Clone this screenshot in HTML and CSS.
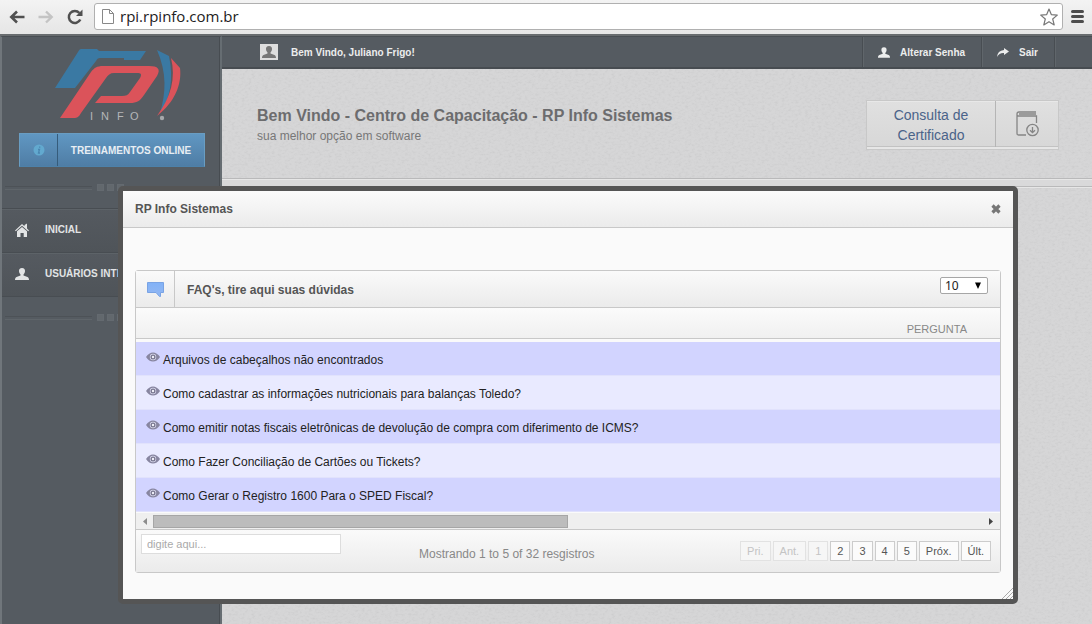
FILE: index.html
```html
<!DOCTYPE html>
<html lang="pt-BR">
<head>
<meta charset="utf-8">
<title>RP Info Sistemas</title>
<link rel="stylesheet" href="styles.css">
</head>
<body>
<svg class="defs" aria-hidden="true">
  <symbol id="user" viewBox="0 0 14 12"><path d="M7 0C4.800 0 3.800 1.400 4 3.300c.1 1.400.7 2.400 1.500 3.100v1.200L1.500 9C.4 9.500 0 10.500 0 12h14c0-1.500-.4-2.500-1.500-3l-4-1.400V6.400c.8-.7 1.400-1.700 1.500-3.100C10.200 1.400 9.200 0 7 0z" fill="currentColor"/></symbol>
  <symbol id="eye" viewBox="0 0 14 10"><path d="M0 5Q3 .5 7 .5T14 5Q11 9.500 7 9.500T0 5z" fill="#8785a0"/><circle cx="7" cy="5" r="3.200" fill="#dcdcf0"/><circle cx="7" cy="5" r="2.500" fill="#77758e"/><circle cx="7" cy="5" r="1.200" fill="#f0f0fa"/></symbol>
</svg>

<div class="page">
  <header class="browser">
    <button class="nav-btn" aria-label="Voltar"><svg width="16" height="14" viewBox="0 0 16 14"><path d="M15.500 7H2.500M8 1.500 2.300 7 8 12.500" fill="none" stroke="#505050" stroke-width="2.600"/></svg></button>
    <button class="nav-btn" aria-label="Avançar"><svg width="16" height="14" viewBox="0 0 16 14"><path d="M.5 7h13M8 1.500 13.700 7 8 12.500" fill="none" stroke="#c4c4c4" stroke-width="2.400"/></svg></button>
    <button class="nav-btn" aria-label="Recarregar"><svg width="16" height="16" viewBox="0 0 16 16"><path d="M13.300 10.500A6 6 0 1 1 12.400 4" fill="none" stroke="#505050" stroke-width="2.500"/><path d="M15.500.5V7H9z" fill="#505050"/></svg></button>
    <div class="address">
      <svg width="12" height="15" viewBox="0 0 12 15"><path d="M.5.500h7l4 4v10H.5zM7.500.500v4h4" fill="#fff" stroke="#888"/></svg>
      <input class="url" type="text" aria-label="Endereço" value="rpi.rpinfo.com.br">
      <svg width="18" height="18" viewBox="0 0 18 18"><path d="M9 1l2.300 5.600 6 .5-4.600 3.900 1.500 5.900L9 13.700l-5.200 3.200 1.500-5.900L.7 7.100l6-.5z" fill="#fff" stroke="#777" stroke-width="1.200" stroke-linejoin="round"/></svg>
    </div>
    <button class="nav-btn" aria-label="Menu"><svg width="13" height="13" viewBox="0 0 13 13"><path d="M1.500 1.500h10M1.500 6.500h10M1.500 11.500h10" stroke="#4c4c4c" stroke-width="3" stroke-linecap="round"/></svg></button>
  </header>

  <div class="app">
    <aside class="sidebar">
      <svg class="logo" role="img" aria-label="RP Info" viewBox="0 0 130 76">
        <path d="M27 2h16l2 2h47l-6 9H70V11H46c-2 0-3 1-4 3L21 41H1L24 5c1-2 2-3 3-3z" fill="#3a79a3"/>
        <path d="M49 19h46c9 0 12 3 8 10L90 48c-4 6-7 8-14 8H41l6-7h21c4 0 6-1 8-4l10-14c2-4 1-5-3-5H60c-4 0-6 2-8 5L27 66c-2 4-4 5-7 5H6l31-46c3-4 6-6 12-6z" fill="#db535a"/>
        <path d="M103 3l12 6c5 23 1 43-9 57 6-20 7-40-3-63z" fill="#3a79a3"/>
        <path d="M117 11l9 10c2 16-5 34-23 48 14-19 19-38 14-58z" fill="#db535a"/>
        <circle cx="108" cy="71" r="2.200" fill="#a5a7aa"/>
        <text x="36" y="73" class="logo-text">I</text><text x="47" y="73" class="logo-text">N</text><text x="63" y="73" class="logo-text">F</text><text x="76" y="73" class="logo-text">O</text>
      </svg>
      <button class="training"><span class="training-icon"><svg width="12" height="12" viewBox="0 0 12 12"><circle cx="6" cy="6" r="5.500" fill="#62a9cf"/><path d="M6.700 2.500v1.200M5 5.500h1.500L5.500 9H7" stroke="#4a86b1" stroke-width="1.300" fill="none"/></svg></span><span class="training-label">TREINAMENTOS ONLINE</span></button>
      <div class="divider"><i></i><i></i><i></i></div>
      <nav class="menu">
        <a href="#"><svg width="14" height="14" viewBox="0 0 14 14"><path d="M0 7.500 7 1l2.500 2.300V2L12 .5v5l2 2-.8.800L7 2.800.8 8.300z" fill="currentColor"/><path d="M2 8.300 7 4l5 4.300V14H8.700v-4H5.500v4H2z" fill="currentColor"/></svg>INICIAL</a>
        <a href="#"><svg width="14" height="12"><use href="#user"/></svg>USUÁRIOS INTERNOS</a>
      </nav>
      <div class="divider"><i></i><i></i><i></i></div>
    </aside>

    <main class="content">
      <div class="topbar">
        <span class="avatar"><svg width="14" height="12"><use href="#user"/></svg></span>
        <span class="welcome">Bem Vindo, Juliano Frigo!</span>
        <a class="top-link" href="#"><svg width="12" height="11"><use href="#user"/></svg>Alterar Senha</a>
        <a class="top-link" href="#"><svg width="12" height="9" viewBox="0 0 12 9"><path d="M7 0l5 3.500L7 7V5Q2.500 4.500 0 9 .5 2.500 7 2z" fill="currentColor"/></svg>Sair</a>
        <span class="top-end"></span>
      </div>
      <section class="hero">
        <div class="hero-text">
          <h1>Bem Vindo - Centro de Capacitação - RP Info Sistemas</h1>
          <p>sua melhor opção em software</p>
        </div>
        <a class="certificate" href="#">
          <span class="cert-label">Consulta de Certificado</span>
          <span class="cert-icon"><svg width="23" height="26" viewBox="0 0 23 26"><g fill="none" stroke="#858585" stroke-width="1.300"><path d="M20 1H3C1.600 1 1 1.500 1 3v19.500c0 1 .6 1.500 1.500 1.500H10M1 3.500Q1 5 3 5h17.500v7M3 3h17"/><circle cx="16.500" cy="19" r="5.700"/><path d="M16.500 16v5.500M14 19.200l2.500 2.500 2.500-2.500"/></g></svg></span>
        </a>
      </section>
    </main>
  </div>

  <div class="dialog" role="dialog" aria-labelledby="dialog-title">
    <div class="dialog-head">
      <h2 id="dialog-title">RP Info Sistemas</h2>
      <button class="close" aria-label="Fechar"><svg width="10" height="10" viewBox="0 0 10 10"><path d="M1.500 1.500l7 7M8.500 1.500l-7 7" stroke="#767676" stroke-width="3.200"/></svg></button>
    </div>
    <div class="panel">
      <div class="panel-head">
        <span class="panel-icon"><svg width="17" height="16" viewBox="0 0 17 16"><defs><linearGradient id="bubble" x2="0" y2="1"><stop stop-color="#82b2f7"/><stop offset="1" stop-color="#93b7f2"/></linearGradient></defs><path d="M.5.500h16v10h-3v4h-1l-3.500-4H.5z" fill="url(#bubble)" stroke="#79a3e4"/></svg></span>
        <h3>FAQ's, tire aqui suas dúvidas</h3>
        <span class="length"><select aria-label="Registros por página"><option>10</option><option>25</option></select><svg width="6" height="7" viewBox="0 0 6 7"><path d="M0 .5h6L3 7z"/></svg></span>
      </div>
      <table class="faq">
        <thead><tr><th>PERGUNTA</th></tr></thead>
        <tbody>
          <tr><td><svg width="14" height="10"><use href="#eye"/></svg>Arquivos de cabeçalhos não encontrados</td></tr>
          <tr><td><svg width="14" height="10"><use href="#eye"/></svg>Como cadastrar as informações nutricionais para balanças Toledo?</td></tr>
          <tr><td><svg width="14" height="10"><use href="#eye"/></svg>Como emitir notas fiscais eletrônicas de devolução de compra com diferimento de ICMS?</td></tr>
          <tr><td><svg width="14" height="10"><use href="#eye"/></svg>Como Fazer Conciliação de Cartões ou Tickets?</td></tr>
          <tr><td><svg width="14" height="10"><use href="#eye"/></svg>Como Gerar o Registro 1600 Para o SPED Fiscal?</td></tr>
        </tbody>
      </table>
      <div class="scrollbar">
        <svg width="17" height="9" viewBox="0 0 17 9"><path d="M11 1v7L7 4.500z" fill="#8c8c8c"/></svg>
        <div class="track"><div class="thumb"></div></div>
        <svg width="17" height="9" viewBox="0 0 17 9"><path d="M6 1v7l4-3.500z" fill="#444"/></svg>
      </div>
      <div class="panel-foot">
        <input class="search" type="text" aria-label="Pesquisar" placeholder="digite aqui...">
        <span class="info">Mostrando 1 to 5 of 32 resgistros</span>
        <div class="pages">
          <button disabled>Pri.</button><button disabled>Ant.</button><button disabled>1</button><button>2</button><button>3</button><button>4</button><button>5</button><button>Próx.</button><button>Últ.</button>
        </div>
      </div>
    </div>
    <svg class="grip" width="12" height="12" viewBox="0 0 12 12"><path d="M1 12 12 1M5 12l7-7M9 12l3-3" stroke="#aaa" fill="none"/></svg>
  </div>
</div>
</body>
</html>
```
FILE: styles.css
```css
* { box-sizing: border-box; }
body { margin: 0; font: 12px "Liberation Sans", Arial, sans-serif; color: #555; }
h1, h2, h3, p { margin: 0; }
button, input, select { font-family: inherit; }
a { color: inherit; text-decoration: none; }
svg { flex: none; }
.defs { position: absolute; width: 0; height: 0; }
.page { position: relative; min-height: 100vh; display: flex; flex-direction: column; overflow: hidden; }

.browser { display: flex; align-items: center; height: 34px; padding: 0 6px 1px 7px; background: linear-gradient(#f3f3f3, #e6e6e6); }
.nav-btn { display: flex; justify-content: center; width: 20px; margin-right: 9px; padding: 0; border: 0; background: none; }
.nav-btn:last-child { width: 13px; margin: 0 2px 0 8px; }
.address { flex: 1; display: flex; align-items: center; gap: 6px; height: 27px; padding: 0 4px 0 7px; border: 1px solid #b0b0b0; border-radius: 3px; background: #fff; }
.url { flex: 1; min-width: 0; padding: 0 0 2px; border: 0; outline: 0; background: none; color: #222; font: 15px/20px "Open Sans", "Noto Sans", sans-serif; }

.app { flex: 1; display: flex; border-top: 2px solid #686c6f; background: #555b61; }
.sidebar { width: 222px; flex: none; display: flex; flex-direction: column; border-left: 2px solid #70767b; border-right: 2px solid #666d72; border-top: 1px solid #494e53; background: #555b61; box-shadow: inset -1px 0 #474c51; }
.logo { width: 130px; height: 76px; margin: 10px 0 0 52px; }
.logo-text { font: 11px "Liberation Sans", Arial, sans-serif; fill: #b4b6b8; }
.training { display: flex; align-items: center; height: 34px; margin: 10px 15px 0 17px; padding: 0; border: 1px solid #699dc2; border-bottom-color: #4d81a9; background: linear-gradient(#6097c2, #4f7da5); color: #e8eef3; font-size: 10px; font-weight: bold; }
.training-icon { display: flex; align-items: center; justify-content: center; align-self: stretch; width: 38px; border-right: 1px solid #365c7b; }
.training-label { flex: 1; white-space: nowrap; }
.divider { display: flex; align-items: center; gap: 3px; height: 41px; padding-left: 3px; }
.divider::before { content: ""; width: 87px; height: 2px; margin-right: 2px; border-top: 1px solid #4d5257; border-bottom: 1px solid #5f656a; }
.divider::after { content: ""; flex: 1; height: 2px; border-top: 1px solid #4d5257; border-bottom: 1px solid #5f656a; }
.divider i { width: 7px; height: 7px; border: 1px solid #646a70; background: #62686d; }
.menu a { display: flex; align-items: center; gap: 16px; height: 44px; padding: 0 0 2px 13px; border-top: 1px solid #484d52; box-shadow: inset 0 1px #5d6368; background: linear-gradient(#555a60, #4f5459); color: #e2e4e5; font-size: 10px; font-weight: bold; white-space: nowrap; }
.menu { border-bottom: 1px solid #484d52; }

.content { flex: 1; min-width: 0; background-color: #d2d2d4; background-image: url("data:image/svg+xml,%3Csvg xmlns='http://www.w3.org/2000/svg' width='180' height='180'%3E%3Cfilter id='n' x='0' y='0' width='1' height='1'%3E%3CfeTurbulence type='fractalNoise' baseFrequency='.3 .5' numOctaves='3' stitchTiles='stitch'/%3E%3CfeColorMatrix values='1.600 0 0 0 0 1.600 0 0 0 0 1.600 0 0 0 0 0 0 0 0 1'/%3E%3C/filter%3E%3Crect width='180' height='180' filter='url(%23n)' opacity='.08'/%3E%3C/svg%3E"); }
.topbar { display: flex; align-items: center; height: 33px; border-top: 1px solid #494e53; border-bottom: 2px solid #474c51; background: #555b61; color: #eceded; font-size: 10px; font-weight: bold; }
.avatar { display: flex; align-items: center; justify-content: center; width: 18px; height: 16px; margin: 0 13px 0 38px; background: #dedede; color: #777; }
.welcome { flex: 1; }
.top-link { display: flex; align-items: center; gap: 10px; height: 100%; padding: 0 16px 0 15px; border-left: 1px solid #484d52; box-shadow: inset 1px 0 #60666b; }
.top-end { align-self: stretch; width: 38px; border-left: 1px solid #484d52; box-shadow: inset 1px 0 #60666b; }
.hero { display: flex; align-items: center; justify-content: space-between; height: 110px; padding: 2px 33px 0 35px; border-bottom: 1px solid #b9b9ba; }
.content::after { content: ""; display: block; height: 7px; border-top: 1px solid #e6e6e6; border-bottom: 1px solid #e6e6e6; background: #d9d9da; box-shadow: inset 0 -1px #b9b9ba; }
h1 { font-size: 16px; line-height: 22px; color: #6c6c6e; }
.hero p { line-height: 18px; color: #777; }
.certificate { display: flex; width: 193px; height: 50px; border: 1px solid #c8c8c8; background: linear-gradient(#e0e0e0, #d7d7d7); box-shadow: inset 0 1px #e8e8e8, inset 0 -2px #e6e6e6, inset 0 -3px #c2c2c2; color: #4a6389; font-size: 14px; line-height: 20px; text-align: center; }
.cert-label { flex: 1; padding: 4px 20px; }
.cert-icon { display: flex; align-items: center; justify-content: center; width: 63px; margin-bottom: 2px; border-left: 1px solid #b5b5b5; }

.dialog { position: absolute; left: 118px; right: 74px; top: 186px; padding-bottom: 26px; border: 5px solid #555; border-radius: 5px; background: #fafafa; }
.dialog-head { display: flex; align-items: center; justify-content: space-between; height: 37px; padding: 0 12px; border-bottom: 1px solid #c8c8c8; background: linear-gradient(#fbfbfb, #ebebeb); }
h2, h3 { font-size: 12px; line-height: 16px; color: #555; }
.close { display: flex; padding: 0; border: 0; background: none; }
.panel { margin: 42px 12px 0; border: 1px solid #c8c8c8; border-radius: 3px; }
.panel-head { display: flex; align-items: center; height: 37px; border-bottom: 1px solid #c8c8c8; background: linear-gradient(#fafafa, #ebebeb); }
.panel-icon { display: flex; align-items: center; justify-content: center; align-self: stretch; width: 39px; padding-top: 2px; border-right: 1px solid #c8c8c8; }
h3 { flex: 1; padding: 2px 0 0 12px; }
.length { display: flex; align-items: center; width: 48px; height: 17px; margin: 0 12px 7px 0; padding-right: 6px; border: 1px solid #a6a6a6; border-radius: 2px; background: #fff; }
.length select { flex: 1; min-width: 0; appearance: none; border: 0; padding: 1px 0 0 4px; background: none; color: #222; font: 12px/14px "Noto Sans", sans-serif; }
.faq { width: 100%; border-collapse: separate; border-spacing: 0; }
.faq th { height: 31px; padding: 11px 33px 0 0; border-bottom: 1px solid #c8c8c8; background: linear-gradient(#fbfbfb, #f0f0f0); color: #888; font-size: 11px; font-weight: normal; text-align: right; }
.faq tbody::before { content: ""; display: block; height: 3px; }
.faq td { height: 34px; padding: 2px 0 0 10px; border-bottom: 1px solid #e1e2fc; background: #e9eaff; color: #222; }
.faq tr:nth-child(odd) td { background: #d2d4ff; }
.faq td svg { margin-right: 3px; vertical-align: 2px; }
.scrollbar { display: flex; align-items: center; height: 17px; background: #efefef; border-top: 1px solid #fafafa; }
.track { flex: 1; height: 13px; }
.thumb { width: 50%; height: 100%; border: 1px solid #a6a6a6; background: #bcbcbc; }
.panel-foot { display: flex; align-items: flex-start; height: 43px; padding: 4px 9px 0 5px; border-top: 1px solid #c8c8c8; background: linear-gradient(#fafafa, #ebebeb); }
.search { width: 200px; height: 20px; padding: 0 5px; border: 1px solid #ddd; background: #fff; font-size: 11px; }
.search::placeholder { color: #aaa; }
.info { flex: 1; padding: 12px 0 0 78px; color: #888; line-height: 16px; }
.pages { display: flex; gap: 2px; padding-top: 7px; }
.pages button { height: 20px; padding: 0 6px; border: 1px solid #ccc; background: #fbfbfb; color: #555; font-size: 11px; }
.pages button:disabled { border-color: #e2e2e2; background: #f6f6f6; color: #c4c4c4; }
.grip { position: absolute; right: 0; bottom: 0; }
```
